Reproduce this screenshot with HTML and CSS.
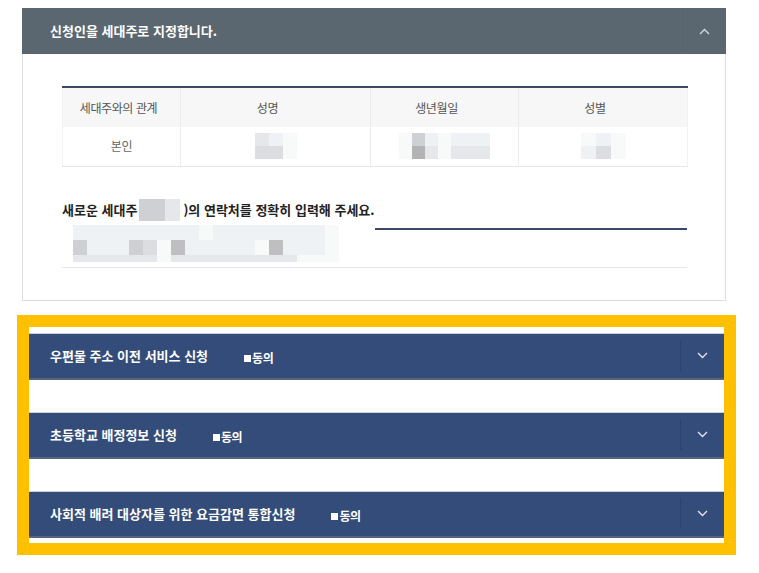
FILE: index.html
```html
<!DOCTYPE html>
<html lang="ko">
<head>
<meta charset="utf-8">
<link rel="stylesheet" href="styles.css">
</head>
<body>
<div class="page">
  <section class="panel">
    <div class="panel-head">
      <h2 class="panel-title">신청인을 세대주로 지정합니다.</h2>
      <div class="toggle toggle-gray">
        <svg width="11" height="7" viewBox="0 0 11 7"><polyline points="1,6 5.5,1.5 10,6" fill="none" stroke="#d3d9de" stroke-width="1.4"/></svg>
      </div>
    </div>
    <div class="panel-body">
      <table class="info">
        <thead>
          <tr><th class="c1">세대주와의 관계</th><th class="c2">성명</th><th class="c3">생년월일</th><th class="c4">성별</th></tr>
        </thead>
        <tbody>
          <tr>
            <td>본인</td>
            <td><span class="pix pix-name"><i class="p2"></i><i class="p1"></i><i class="p0"></i><i class="p3"></i><i class="p3"></i><i class="p0"></i></span></td>
            <td><span class="pix pix-birth"><i class="p0"></i><i class="p4"></i><i class="p1"></i><i class="p0"></i><i class="p1"></i><i class="p1"></i><i class="p1"></i><i class="p0"></i><i class="p6"></i><i class="p2"></i><i class="p0"></i><i class="p2"></i><i class="p2"></i><i class="p2"></i></span></td>
            <td><span class="pix pix-gender"><i class="p0"></i><i class="p1"></i><i class="p0"></i><i class="p1"></i><i class="p3"></i><i class="p0"></i></span></td>
          </tr>
        </tbody>
      </table>

      <p class="notice">새로운 세대주<span class="pix pix-inline"><i class="p4"></i><i class="p2"></i></span>)의 연락처를 정확히 입력해 주세요.</p>

      <div class="contact">
        <div class="pix pix-contact">
          <i class="p1"></i><i class="p1"></i><i class="p1"></i><i class="p1"></i><i class="p1"></i><i class="p1"></i><i class="p1"></i><i class="p1"></i><i class="p1"></i><i class="p0"></i><i class="p1"></i><i class="p1"></i><i class="p1"></i><i class="p1"></i><i class="p1"></i><i class="p1"></i><i class="p1"></i><i class="p1"></i><i class="p0"></i>
          <i class="p4"></i><i class="p1"></i><i class="p1"></i><i class="p1"></i><i class="p4"></i><i class="p3"></i><i class="p0"></i><i class="p5"></i><i class="p1"></i><i class="p1"></i><i class="p1"></i><i class="p1"></i><i class="p1"></i><i class="p0"></i><i class="p5"></i><i class="p1"></i><i class="p1"></i><i class="p1"></i><i class="p0"></i>
          <i class="p2"></i><i class="p2"></i><i class="p2"></i><i class="p2"></i><i class="p2"></i><i class="p2"></i><i class="p0"></i><i class="p2"></i><i class="p2"></i><i class="p2"></i><i class="p2"></i><i class="p2"></i><i class="p2"></i><i class="p2"></i><i class="p2"></i><i class="p2"></i><i class="p0"></i><i class="p0"></i><i class="p0"></i>
        </div>
        <div class="contact-line"></div>
      </div>
    </div>
  </section>

  <section class="highlight">
    <div class="bar">
      <span class="bar-title">우편물 주소 이전 서비스 신청</span>
      <span class="agree"><span class="sq"></span>동의</span>
      <div class="toggle toggle-navy">
        <svg width="11" height="7" viewBox="0 0 11 7"><polyline points="1,1 5.5,5.5 10,1" fill="none" stroke="#dfe5ef" stroke-width="1.4"/></svg>
      </div>
    </div>
    <div class="bar">
      <span class="bar-title">초등학교 배정정보 신청</span>
      <span class="agree"><span class="sq"></span>동의</span>
      <div class="toggle toggle-navy">
        <svg width="11" height="7" viewBox="0 0 11 7"><polyline points="1,1 5.5,5.5 10,1" fill="none" stroke="#dfe5ef" stroke-width="1.4"/></svg>
      </div>
    </div>
    <div class="bar">
      <span class="bar-title">사회적 배려 대상자를 위한 요금감면 통합신청</span>
      <span class="agree"><span class="sq"></span>동의</span>
      <div class="toggle toggle-navy">
        <svg width="11" height="7" viewBox="0 0 11 7"><polyline points="1,1 5.5,5.5 10,1" fill="none" stroke="#dfe5ef" stroke-width="1.4"/></svg>
      </div>
    </div>
  </section>
</div>
</body>
</html>
```
FILE: styles.css
```css
* { box-sizing: border-box; }
html, body { margin: 0; padding: 0; background: #fff; }
body {
  font-family: "Noto Sans CJK KR", "Noto Sans", "Liberation Sans", sans-serif;
  color: #222;
}
.page { padding-top: 8px; width: 759px; }

/* Top panel */
.panel {
  margin-left: 22px;
  width: 704px;
  border: 1px solid #dedede;
  border-top: 0;
  background: #fff;
}
.panel-head {
  height: 46px;
  margin: 0 -1px;
  background: #5a6670;
  display: flex;
  align-items: center;
  justify-content: space-between;
}
.panel-title {
  margin: 0 0 0 28px;
  font-size: 13px;
  line-height: 18px;
  font-weight: 700;
  color: #fff;
  letter-spacing: 0;
}
.toggle {
  width: 44px;
  display: flex;
  align-items: center;
  justify-content: center;
}
.toggle-gray { height: 46px; border-left: 1px solid #57636d; }
.panel-body { padding: 32px 38px 32px 39px; }

/* Table */
.info {
  width: 625px;
  border-collapse: collapse;
  border-top: 2px solid #3b4965;
  table-layout: fixed;
}
.info th, .info td {
  font-size: 12px;
  font-weight: 400;
  line-height: 16px;
  letter-spacing: -0.4px;
  text-align: center;
  border-left: 1px solid #ececec;
  border-bottom: 1px solid #e6e6e6;
}
.info th:first-child, .info td:first-child { border-left: 1px solid #f2f2f2; }
.info tr > :last-child { border-right: 1px solid #f2f2f2; }
.info th {
  height: 40px;
  background: #f7f7f7;
  color: #555;
  padding: 0 16px 0 0;
  border-bottom: 0;
}
.info th.c1 { padding: 0 6px 0 0; }
.info td {
  height: 39px;
  color: #666;
  padding: 0;
  background: #fff;
}
.c1 { width: 118px; }
.c2 { width: 190px; }
.c3 { width: 148px; }
.c4 { width: 169px; }

/* pixelated blur blocks */
.pix { display: inline-grid; vertical-align: middle; }
.pix i { display: block; }
.p0 { background: #f8f9f9; }
.p1 { background: #eef2f5; }
.p2 { background: #e6e7ea; }
.p3 { background: #dcdde0; }
.p4 { background: #cfd0d3; }
.p5 { background: #bfbfc2; }
.p6 { background: #b3b3b6; }
.pix-name { grid-template-columns: repeat(3, 14px); grid-template-rows: 13px 13px; }
.pix-birth { grid-template-columns: repeat(7, 13px); grid-template-rows: 13px 13px; }
.pix-gender { grid-template-columns: repeat(3, 15px); grid-template-rows: 13px 13px; }
.pix-inline { grid-template-columns: 26px 15px; grid-template-rows: 22px; margin: -1px 3px -1px 2px; }

.notice {
  margin: 33px 0 0 0;
  height: 20px;
  font-size: 13px;
  line-height: 20px;
  font-weight: 700;
  color: #222;
  letter-spacing: 0;
  display: flex;
  align-items: center;
}

.contact {
  margin-top: 3px;
  padding: 2px 0 0 11px;
  height: 45px;
  border-bottom: 1px solid #e8e8e8;
  display: flex;
  align-items: flex-start;
}
.pix-contact {
  grid-template-columns: repeat(19, 14px);
  grid-template-rows: 15px 15px 7px;
}
.contact-line {
  flex: 1;
  margin: 3px 0 0 36px;
  border-top: 2px solid #3b4965;
}

/* Highlighted accordion group */
.highlight {
  margin: 14px 0 0 17px;
  width: 719px;
  border: 12px solid #ffc000;
  background: #fff;
  padding: 6px 0 5px;
  display: flex;
  flex-direction: column;
  gap: 32px;
}
.bar {
  height: 47px;
  background: #344c79;
  border-top: 1px solid #c9d0da;
  border-bottom: 2px solid #56657b;
  display: flex;
  align-items: center;
  padding-left: 21px;
}
.bar-title {
  font-size: 13px;
  line-height: 18px;
  font-weight: 700;
  color: #fff;
  letter-spacing: 0;
}
.agree {
  margin-left: 36px;
  margin-top: 5px;
  font-size: 12px;
  line-height: 14px;
  font-weight: 700;
  color: #fff;
  letter-spacing: -0.5px;
  display: flex;
  align-items: center;
}
.sq {
  width: 7px;
  height: 7px;
  background: #fff;
  margin-right: 1px;
}
.toggle-navy {
  margin-left: auto;
  height: 31px;
  border-left: 1px solid #2e4470;
}
```
